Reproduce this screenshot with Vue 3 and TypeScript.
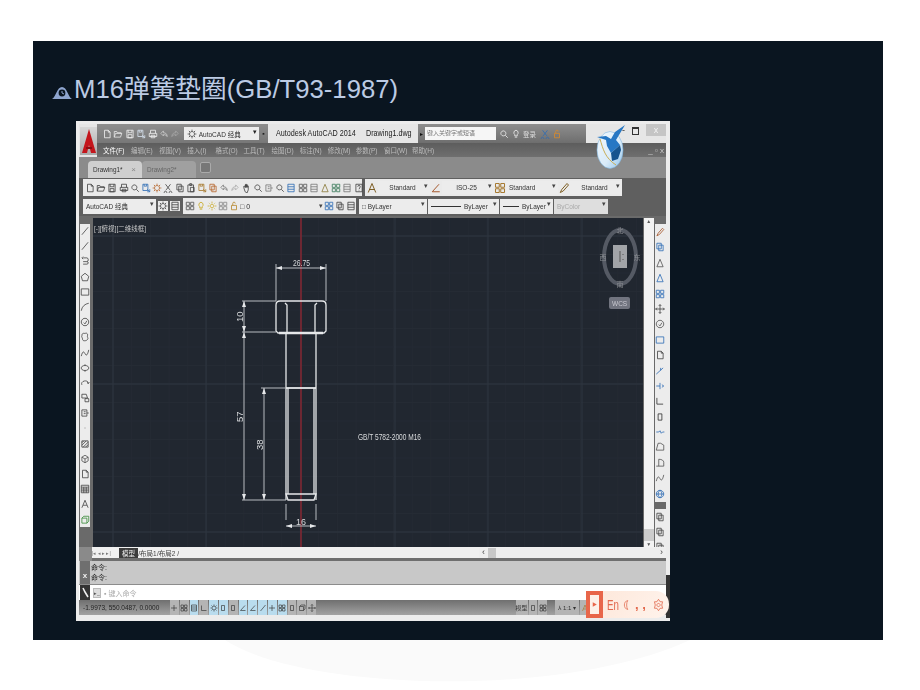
<script setup lang="ts">
import { h } from "vue";

const P: Record<string, string> = {
  doc: "M4 2h6l3 3v9H4zM10 2v3h3",
  open: "M2 13V4h4l1 2h6v2M2 13l2-6h10l-2 6z",
  save: "M3 2h10v12H3zM5 2v4h6V2M5 9h6v5H5z",
  saveas: "M3 2h8v10H3zM5 2v3h4V2M10 10l4 4M14 10v4h-4",
  print: "M4 7V2h8v5M2 7h12v5H2zM5 10h6v4H5z",
  undo: "M3 7l4-4v3c4 0 6 2 6 6-1-2-3-3-6-3v2z",
  redo: "M13 7L9 3v3c-4 0-6 2-6 6 1-2 3-3 6-3v2z",
  gear: "M8 4a4 4 0 1 0 .01 0M8 1v2M8 13v2M1 8h2M13 8h2M3 3l2 2M11 11l2 2M13 3l-2 2M5 11l-2 2",
  lens: "M7 3a4 4 0 1 0 .01 0M10 10l4 4",
  prev: "M3 3h8v10H3zM11 8h3M6 6h3M6 9h3",
  cut: "M4 2l7 9M12 2l-7 9M4 13a2 2 0 1 0 .01 0M12 13a2 2 0 1 0 .01 0",
  copy: "M3 2h7v9H3zM6 5h7v9H6z",
  paste: "M3 3h9v11H3zM6 1h3v3H6zM7 7h6v7H7z",
  hand: "M5 14L3 8V5l2 2V3h1v4-5h1v5-4h2v4-2h1v6l-2 5z",
  grid: "M2 2h5v5H2zM9 2h5v5H9zM2 9h5v5H2zM9 9h5v5H9z",
  bar: "M3 2h10v12H3zM3 6h10M3 10h10",
  help: "M3 2h10v12H3zM6 6c0-3 4-3 4 0 0 2-2 2-2 4M8 12v1",
  line: "M3 14L13 2",
  xline: "M3 14L13 2M3 14h.01M8 8h.01M13 2h.01",
  poly: "M5 3h6c3 0 3 6 0 6H5M5 13h6c3 0 3-4 0-4M5 1L3 3l2 2",
  penta: "M8 2l6 5-2 7H4L2 7z",
  rect: "M2 3h12v10H2z",
  arc: "M2 14C3 7 8 3 14 2",
  circle: "M8 2a6 6 0 1 0 .01 0M6 9l2 2 3-5",
  cloud: "M4 3c2-2 3 0 5-1s4 2 3 4 2 4 0 6-3 2-5 2-3-1-3-3-2-3-1-5-1-2 1-3z",
  wave: "M2 13c2-8 4-8 6-4s4 3 6-6",
  ell: "M8 4c-8 0-8 8 0 8s8-8 0-8M8 2v2M8 12v2",
  ellarc: "M3 11C0 4 14 2 13 9M12 6l1 3 2-2",
  block: "M3 2h7l2 6H3zM8 9h6v5H8z",
  dot: "M7.5 8h1",
  hatch: "M3 3h10v10H3zM3 6l3-3M3 10l7-7M5 13l8-8M9 13l4-4",
  cube: "M3 5l5-3 5 3v6l-5 3-5-3zM3 5l5 3 5-3M8 8v6",
  table: "M2 2h12v12H2zM2 5h12M2 8h12M2 11h12M6 5v9M10 5v9",
  letter: "M3 14L8 2l5 12M5 10h6",
  pencil: "M3 14l2-4 7-8 2 2-7 8z",
  tri: "M8 2l5 12H3z",
  arrows: "M8 1v14M1 8h14M6 3l2-2 2 2M6 13l2 2 2-2M3 6L1 8l2 2M13 6l2 2-2 2",
  bulb: "M8 2a4 4 0 0 0-2 7v2h4V9a4 4 0 0 0-2-7M6 13h4",
  sun: "M8 5a3 3 0 1 0 .01 0M8 1v2M8 13v2M1 8h2M13 8h2M3 3l1 1M12 12l1 1M13 3l-1 1M4 12l-1 1",
  lock: "M4 7h8v7H4zM6 7V4c0-3 4-3 4 0",
  model: "M3 5v8h8M3 5l3-3h8v8l-3 3M11 5v8M3 5h8",
  cross: "M8 2v12M2 8h12",
  corner: "M3 3v10h10",
  angle: "M3 13L12 3M3 13h10",
  btn: "M5 3h6v10H5z",
  trim: "M2 13L13 3M9 3v4",
  ext: "M2 8h6M8 3v10M11 6l3 2-3 2",
  join: "M2 8h4l2-2 2 4 2-2h3",
  chamfer: "M2 13h12V5L9 2H5z",
  fillet: "M2 13h12V7C14 4 11 2 6 2v11",
  globe: "M8 2a6 6 0 1 0 .01 0M2 8h12M8 2c-4 4-4 8 0 12M8 2c4 4 4 8 0 12",
};

type Ic = { n: string; c?: string };
const Ico = (props: Ic) =>
  h("svg", { class: "ic", viewBox: "0 0 16 16" }, [
    h("path", { d: P[props.n], fill: "none", stroke: props.c || "#444", "stroke-width": 1.3 }),
  ]);
Ico.props = ["n", "c"];

const ic = (names: string) => names.split(" ").map((s) => {
  const [n, c] = s.split(":");
  return { n, c } as Ic;
});

const qat = ic("doc:#f0f0f0 open:#e6e6e6 save:#f0f0f0 saveas:#d6e2ee print:#eee undo:#ccc redo:#a8a8a8");
const menus = ["文件(F)", "编辑(E)", "视图(V)", "插入(I)", "格式(O)", "工具(T)", "绘图(D)", "标注(N)", "修改(M)", "参数(P)", "窗口(W)", "帮助(H)"];
const std = ic("doc open save print lens saveas:#2f6db5 gear:#b5652b cut copy paste saveas:#a5762b copy:#b5652b undo:#777 redo:#aaa hand lens prev:#777 lens bar:#2f6db5 grid:#555 bar:#777 tri:#8a7a3a grid:#3a7a5a bar:#777 help");
const layerIcons = ic("grid:#555 bulb:#c8a820 sun:#c8a820 grid:#888 lock:#b5862b");
const leftTools = ic("line xline poly penta rect arc circle cloud wave ell ellarc block prev dot hatch cube:#555 doc table letter model:#3b8d3b");
const rightTools = ic("pencil:#a5562b copy:#2f6db5 tri:#555 tri:#2f6db5 grid:#2f6db5 arrows circle:#555 rect:#2f6db5 doc trim:#2f6db5 ext:#2f6db5 corner:#333 btn:#333 join:#2f6db5 chamfer:#555 fillet:#555 wave:#555 globe:#2f6db5");
const rightTools2 = ic("copy copy copy");
const status = [
  { n: "cross", on: false }, { n: "grid", on: false }, { n: "bar", on: true }, { n: "corner", on: false },
  { n: "gear", on: true }, { n: "btn", on: true }, { n: "btn", on: false }, { n: "angle", on: true },
  { n: "angle", on: true }, { n: "line", on: true }, { n: "cross", on: true }, { n: "grid", on: true },
  { n: "btn", on: false }, { n: "model", on: false }, { n: "arrows", on: false },
];

const gridX = Array.from({ length: 30 }, (_, i) => 20 + i * 18.7);
const gridY = Array.from({ length: 18 }, (_, i) => 18 + i * 18.5);
const majorX = [20, 113, 208, 302, 395, 489];
const majorY = [18, 166, 314];
</script>

<template>
  <div class="page">
    <svg class="swoosh" viewBox="0 0 920 690" aria-hidden="true">
      <path d="M225 640C300 690 560 700 690 640z" fill="#fafafa" />
    </svg>
    <section class="slide">
      <h1 class="title">
        <svg class="bullet" viewBox="0 0 20 13">
          <path d="M0 13C4 11 5 1 10 1s6 10 10 12z" fill="#8ea5cf" />
          <circle cx="10" cy="7" r="3.4" fill="#0a1520" />
          <path d="M10 5v2l2 1" stroke="#8ea5cf" fill="none" />
        </svg>
        <span>M16弹簧垫圈(GB/T93-1987)</span>
      </h1>

      <div class="shot">
        <div class="win">
          <div class="top">
            <div class="logo">
              <svg viewBox="0 0 16 26" width="16" height="26">
                <path d="M8 1L15 25H10L8 17 6 25H1z" fill="#c4161c" />
                <path d="M5 19h6v2H5z" fill="#8c0f14" />
              </svg>
            </div>
            <div class="top-right">
              <div class="titlebar">
                <div class="qat">
                  <Ico v-for="(i, k) in qat" :key="k" :n="i.n" :c="i.c" />
                  <div class="combo wsp"><Ico n="gear" />AutoCAD 经典<i class="caret dark">▾</i></div>
                  <i class="caret dark more">▪</i>
                </div>
                <div class="apptitle"><span>Autodesk AutoCAD 2014</span><span class="file">Drawing1.dwg</span></div>
                <div class="search">
                  <i class="tri-r">▸</i>
                  <div class="searchbox">键入关键字或短语</div>
                  <Ico n="lens" c="#eee" /><Ico n="bulb" c="#eee" /><span class="login">登录</span>
                  <span class="grow"></span>
                  <Ico n="cut" c="#2f6db5" /><Ico n="lock" c="#d98a2b" />
                </div>
                <div class="winbtns"><b>-</b><b class="sq"></b><b class="close">x</b></div>
              </div>
              <div class="menubar">
                <span v-for="(m, k) in menus" :key="m" :class="{ active: k === 0 }">{{ m }}</span>
                <span class="grow"></span>
                <span class="mdi">_ ▫ x</span>
              </div>
            </div>
          </div>

          <div class="tabs">
            <div class="tab cur"><span>Drawing1*</span> <em>×</em></div>
            <div class="tab"><span>Drawing2*</span></div>
            <div class="newtab"></div>
          </div>

          <div class="bars">
            <div class="row one">
              <div class="group std">
                <Ico v-for="(i, k) in std" :key="k" :n="i.n" :c="i.c" />
              </div>
              <div class="group tail">
                <Ico n="letter" c="#7a5a20" /><div class="combo w52 center">Standard<i class="caret">▾</i></div>
                <Ico n="angle" c="#a5562b" /><div class="combo w52 center">ISO-25<i class="caret">▾</i></div>
                <Ico n="grid" c="#a5762b" /><div class="combo w52">Standard<i class="caret">▾</i></div>
                <Ico n="pencil" c="#7a5a20" /><div class="combo w52 center">Standard<i class="caret">▾</i></div>
              </div>
            </div>
            <div class="row two">
              <div class="group wsgroup">
                <div class="combo w76">AutoCAD 经典<i class="caret">▾</i></div>
                <Ico n="gear" /><Ico n="bar" />
              </div>
              <div class="group layer">
                <Ico v-for="(i, k) in layerIcons" :key="k" :n="i.n" :c="i.c" />
                <span class="layername">□ 0</span>
                <i class="caret">▾</i>
                <Ico n="grid" c="#2f6db5" /><Ico n="copy" /><Ico n="bar" />
              </div>
              <div class="group props">
                <div class="combo w67">□ ByLayer<i class="caret">▾</i></div>
                <div class="combo w71"><u class="ln"></u>ByLayer<i class="caret">▾</i></div>
                <div class="combo w53"><u class="ln short"></u>ByLayer<i class="caret">▾</i></div>
                <div class="combo w54 off">ByColor<i class="caret">▾</i></div>
              </div>
            </div>
          </div>

          <div class="work">
            <div class="lefttools">
              <Ico v-for="(i, k) in leftTools" :key="k" :n="i.n" :c="i.c" />
            </div>
            <svg class="canvas" viewBox="0 0 550 329" width="550" height="329">
              <rect width="550" height="329" fill="#212730" />
              <g stroke="#252b34" stroke-width="1">
                <line v-for="x in gridX" :key="x" :x1="x" :x2="x" y1="0" y2="329" />
                <line v-for="y in gridY" :key="y" :y1="y" :y2="y" x1="0" x2="550" />
              </g>
              <g stroke="#2f3641" stroke-width="1">
                <line v-for="x in majorX" :key="x" :x1="x" :x2="x" y1="0" y2="329" />
                <line v-for="y in majorY" :key="y" :y1="y" :y2="y" x1="0" x2="550" />
              </g>
              <line x1="208" x2="208" y1="0" y2="329" stroke="#8c2430" stroke-width="1.4" />
              <text x="1" y="13" class="view">[-][俯视][二维线框]</text>

              <g fill="none" stroke="#e6e8ea" stroke-width="1.3">
                <path d="M187 83h42c3 0 4 2 4 4v26l-2 2h-46l-2-2V87c0-2 1-4 4-4z" />
                <path d="M192 85l2 2v28M224 85l-2 2v28" />
                <path d="M186 115h44" stroke-width="2.4" />
                <path d="M193 115v167M223 115v167" />
                <path d="M193 170h30" stroke-width="1.8" />
                <path d="M195 170v106M221 170v106" />
                <path d="M193 276h30l-2 6h-26z" />
              </g>
              <g fill="none" stroke="#b8bcc0" stroke-width="1">
                <path d="M183 46v37M233 46v37M183 50h50" />
                <path d="M149 83h34M149 114h34M151 83v199" />
                <path d="M168 170h25M171 170v112M149 282h44" />
                <path d="M193 286v16M223 286v16M193 308h30" />
              </g>
              <g fill="#e6e8ea">
                <path d="M183 50l6-2v4zM233 50l-6-2v4zM151 83l-2 6h4zM151 114l-2-6h4zM151 114l-2 6h4zM151 282l-2-6h4zM171 170l-2 6h4zM171 282l-2-6h4zM193 308l6-2v4zM223 308l-6-2v4z" />
              </g>
              <g class="dim">
                <text x="200" y="48" textLength="17" lengthAdjust="spacingAndGlyphs">26.75</text>
                <text x="203" y="307" textLength="10" lengthAdjust="spacingAndGlyphs">16</text>
                <text transform="translate(150 104) rotate(-90)">10</text>
                <text transform="translate(150 204) rotate(-90)">57</text>
                <text transform="translate(170 232) rotate(-90)">38</text>
                <text x="265" y="222" class="note" textLength="63" lengthAdjust="spacingAndGlyphs">GB/T 5782-2000 M16</text>
              </g>

              <g>
                <ellipse cx="527" cy="39" rx="16" ry="27" fill="none" stroke="#555a64" stroke-width="4" />
                <rect x="520" y="27" width="14" height="23" fill="#a2a4a8" />
                <path d="M527 33v11M530 36v1M530 41v1" stroke="#555" fill="none" />
                <text x="527" y="15" class="cmp">北</text>
                <text x="527" y="69" class="cmp">南</text>
                <text x="510" y="42" class="cmp">西</text>
                <text x="544" y="42" class="cmp">东</text>
                <rect x="516" y="79" width="21" height="12" rx="2" fill="#71747f" />
                <text x="519" y="88" class="wcs">WCS</text>
              </g>
            </svg>
            <div class="vscroll">
              <i>▲</i><span class="grow"></span><b></b><i>▼</i>
            </div>
            <div class="righttools">
              <div class="rt">
                <Ico v-for="(i, k) in rightTools" :key="k" :n="i.n" :c="i.c" />
              </div>
              <div class="rt second">
                <Ico v-for="(i, k) in rightTools2" :key="k" :n="i.n" :c="i.c" />
              </div>
            </div>
          </div>

          <div class="layouts">
            <span class="nav">|◂ ◂ ▸ ▸|</span>
            <span class="ltab cur">模型</span>
            <span class="ltab">/布局1</span>
            <span class="ltab">/布局2 /</span>
            <span class="grow"></span>
            <div class="hscroll"><i>‹</i><b></b><span class="grow"></span><i>›</i></div>
          </div>

          <div class="cmdlog">
            <div class="cmdhandle">x</div>
            <div class="cmdtext">命令:<br />命令:</div>
          </div>
          <div class="cmdinput">
            <div class="cmdwrench">
              <svg viewBox="0 0 10 15" width="10" height="15"><path d="M3 3l2 4 3 5" stroke="#eee" stroke-width="1.6" fill="none" /></svg>
            </div>
            <span class="prompt">▸_</span><span class="hint">▪ 键入命令</span>
          </div>
          <div class="statusbar">
            <span class="coords">-1.9973, 550.0487, 0.0000</span>
            <div class="stbtns">
              <span v-for="(s, k) in status" :key="k" :class="['st', { on: s.on }]"><Ico :n="s.n" c="#333" /></span>
            </div>
            <span class="grow"></span>
            <div class="stbtns">
              <span class="st tx">模型</span><span class="st"><Ico n="btn" c="#333" /></span><span class="st"><Ico n="grid" c="#333" /></span>
            </div>
            <div class="stbtns scale">
              <span class="st tx wide">⅄ 1:1 ▾</span><span class="st"><Ico n="letter" c="#a5762b" /></span>
            </div>
          </div>
        </div>

        <!-- floating bird badge over the title bar -->
        <svg class="bird" viewBox="0 0 30 44">
          <defs>
            <linearGradient id="egg" x1="0" y1="0" x2="1" y2="1">
              <stop offset="0" stop-color="#f2f8fd" />
              <stop offset=".6" stop-color="#d9ebf9" />
              <stop offset="1" stop-color="#8fc2ea" />
            </linearGradient>
          </defs>
          <ellipse cx="14" cy="25" rx="13" ry="18.5" fill="url(#egg)" stroke="#7fb4de" stroke-width=".6" />
          <path d="M29 0L19 7 15 14 10 11 1 12l9 3 1 6 4 7 9-8-4-5z" fill="#2677c4" />
          <path d="M15 28l9-8 1 5-3 9-6 2z" fill="#16548f" />
          <path d="M4 14C7 24 9 33 20 40" fill="none" stroke="#c9ad55" stroke-width="1" />
        </svg>

        <!-- scrollbar stub of the outer window -->
        <div class="stub"></div>

        <!-- input method bar, sits over the status bar -->
        <div class="ime">
          <div class="ime-logo"><svg viewBox="0 0 12 12"><path d="M3 2l7 4-7 4z" fill="#e8664a" /></svg></div>
          <span class="en">En</span>
          <svg class="ime-ic" viewBox="0 0 12 16"><path d="M9 2C3 3 3 13 9 14 7 11 7 5 9 2z" fill="none" stroke="#e2684c" /></svg>
          <span class="comma">, ,</span>
          <svg class="ime-gear" viewBox="0 0 16 16"><path d="M8 1l2 3h3l-1 4 1 4h-3l-2 3-2-3H3l1-4-1-4h3zM8 6a2 2 0 1 0 .01 0" fill="none" stroke="#e2684c" /></svg>
        </div>
      </div>
    </section>
  </div>
</template>

<style>
html, body { margin: 0; background: #fff; }
</style>

<style scoped>
.page {
  position: relative;
  width: 920px;
  height: 690px;
  padding: 41px 37px 0 33px;
  box-sizing: border-box;
  background: #fff;
  overflow: hidden;
  font-family: "Liberation Sans", "Noto Sans CJK SC", sans-serif;
}
.swoosh { position: absolute; inset: 0; width: 920px; height: 690px; }
.slide {
  position: relative;
  width: 850px;
  height: 599px;
  background: #0a1520;
  box-sizing: border-box;
  padding: 33px 0 0 19px;
}
.title {
  display: flex;
  align-items: center;
  gap: 2px;
  margin: 0;
  height: 31px;
  font-size: 25.7px;
  font-weight: 400;
  line-height: 31px;
  color: #bccbe4;
  white-space: nowrap;
}
.bullet { width: 20px; height: 13px; margin-top: 5px; }
.shot {
  position: relative;
  width: 594px;
  height: 500px;
  margin: 16px 0 0 24px;
  background: #ececec;
  padding: 3px 4px 6px 3px;
  box-sizing: border-box;
  filter: blur(0.4px);
  font-size: 7px;
  color: #333;
}
.win { display: flex; flex-direction: column; height: 100%; background: #8a8a8a; }
.ic { width: 10px; height: 10px; flex: none; }
.grow { flex: 1; }
i { font-style: normal; }

.top { display: flex; height: 33px; background: #e6e6e6; }
.logo {
  width: 17px;
  margin: 3px 0 2px 1px;
  background: linear-gradient(#d8d8d8, #aaa);
  display: flex;
  align-items: center;
  justify-content: center;
}
.top-right { flex: 1; display: flex; flex-direction: column; }
.titlebar { height: 19px; display: flex; align-items: center; }
.qat {
  display: flex;
  align-items: center;
  gap: 1.4px;
  width: 171px;
  padding-left: 5px;
  box-sizing: border-box;
  height: 100%;
  background: linear-gradient(#8e8e8e, #777);
}
.combo {
  position: relative;
  display: flex;
  align-items: center;
  height: 13px;
  padding-left: 3px;
  box-sizing: border-box;
  background: #ececec;
  font-size: 6.5px;
  white-space: nowrap;
  color: #333;
}
.wsp { width: 75px; margin-left: 2px; gap: 2px; }
.caret { position: absolute; right: 2px; top: 1px; font-size: 7px; color: #444; }
.caret.dark { color: #222; }
.more { position: static; margin-left: 2px; }
.apptitle {
  width: 150px;
  padding-left: 8px;
  box-sizing: border-box;
  display: flex;
  font: 9px/19px "Liberation Sans", sans-serif;
  color: #222;
  white-space: nowrap;
}
.apptitle span { display: block; width: 90px; transform: scaleX(0.8); transform-origin: left; }
.apptitle .file { width: 50px; }
.search {
  width: 168px;
  height: 100%;
  display: flex;
  align-items: center;
  gap: 2px;
  background: linear-gradient(#8e8e8e, #6e6e6e);
  box-sizing: border-box;
  padding-right: 24px;
}
.tri-r { font-size: 6px; color: #111; margin-left: 2px; }
.searchbox {
  width: 78px;
  height: 13px;
  background: #f6f6f6;
  font-size: 6px;
  line-height: 13px;
  padding-left: 2px;
  box-sizing: border-box;
  color: #777;
  margin-right: 1px;
}
.login { font-size: 6.5px; color: #ddd; white-space: nowrap; }
.winbtns { flex: 1; display: flex; align-items: flex-start; height: 100%; justify-content: flex-end; gap: 7px; }
.winbtns b { font-weight: 400; font-size: 9px; color: #333; line-height: 12px; }
.winbtns .sq { width: 5px; height: 5px; border: 1px solid #333; border-top-width: 2px; margin-top: 3px; }
.winbtns .close { width: 20px; height: 12px; background: #c5c5c5; color: #f3f3f3; text-align: center; }
.menubar {
  height: 14px;
  display: flex;
  align-items: center;
  background: linear-gradient(#5d5d5d, #6f6f6f);
  padding-left: 6px;
  font-size: 6.5px;
  color: #bdbdbd;
}
.menubar span:not(.grow):not(.mdi) { width: 28.1px; flex: none; white-space: nowrap; }
.menubar .active { color: #fff; }
.mdi { padding-right: 2px; color: #ccc; font-size: 8px; }

.tabs {
  height: 21px;
  display: flex;
  align-items: flex-end;
  background: #8b8b8b;
  padding-left: 9px;
  font: 8px "Liberation Sans", sans-serif;
}
.tab {
  width: 54px;
  height: 17px;
  line-height: 17px;
  padding-left: 5px;
  box-sizing: border-box;
  background: #a0a0a0;
  color: #666;
  border-radius: 4px 4px 0 0;
  white-space: nowrap;
}
.tab span { display: inline-block; width: 28px; transform: scaleX(0.8); transform-origin: left; }
.tab.cur { background: #cfcfcf; color: #333; }
.tab em { font-style: normal; margin-left: 8px; color: #888; }
.newtab { width: 9px; height: 9px; margin: 0 0 5px 4px; background: #777; border: 1px solid #aaa; border-radius: 2px; }

.bars { height: 38px; background: #5f5f5f; display: flex; flex-direction: column; gap: 2px; padding: 1px 0 0 4px; box-sizing: border-box; }
.row { display: flex; gap: 3px; align-items: center; }
.row.one { height: 17px; }
.row.two { height: 16px; }
.group { display: flex; align-items: center; height: 100%; background: #eaeaea; }
.std { width: 279px; gap: 1.2px; padding-left: 2px; box-sizing: border-box; }
.tail { padding-left: 1px; }
.tail .ic { width: 12px; height: 12px; }
.w52 { width: 52px; }
.center { justify-content: center; padding-right: 6px; }
.wsgroup { width: 97px; gap: 2px; background: transparent; }
.wsgroup .ic { background: #eaeaea; }
.w76 { width: 76px; height: 15px; }
.layer { position: relative; width: 173px; gap: 1px; padding-left: 2px; box-sizing: border-box; }
.layername { width: 114px; font-size: 7px; }
.layer .caret { position: static; }
.props { gap: 1px; background: transparent; }
.props .combo { height: 15px; }
.w67 { width: 68px; }
.w71 { width: 71px; gap: 3px; }
.w53 { width: 53px; gap: 3px; }
.w54 { width: 54px; }
.off { color: #aaa; background: #dedede; }
.ln { display: block; width: 30px; border-top: 1px solid #333; }
.ln.short { width: 16px; }

.work { flex: 1; display: flex; min-height: 0; background: #6a6a6a; padding-top: 2px; box-sizing: border-box; }
.lefttools {
  width: 10px;
  height: 303px;
  margin: 6px 3px 0 1px;
  padding-top: 2px;
  box-sizing: border-box;
  background: #ececec;
  display: flex;
  flex-direction: column;
  align-items: center;
  gap: 5.2px;
}
.canvas { flex: none; display: block; font-family: "Liberation Sans", "Noto Sans CJK SC", sans-serif; }
.view { font-size: 6.5px; fill: #c8c8c8; }
.dim text { font-size: 9.5px; fill: #d8dadc; }
.dim .note { font-size: 8.5px; }
.cmp { font-size: 7px; fill: #8a8d92; text-anchor: middle; }
.wcs { font-size: 6.5px; fill: #c8c8d0; }
.vscroll {
  width: 10px;
  margin: 0 1px;
  background: #f3f3f3;
  display: flex;
  flex-direction: column;
  align-items: center;
  font-size: 5px;
  color: #555;
}
.vscroll b { width: 100%; height: 12px; background: #ccc; }
.righttools { width: 12px; display: flex; flex-direction: column; gap: 7px; padding-top: 6px; box-sizing: border-box; }
.rt { display: flex; flex-direction: column; align-items: center; gap: 5.4px; background: #ececec; padding: 3px 0; }
.rt.second { flex: 1; }

.layouts {
  height: 11px;
  display: flex;
  align-items: center;
  background: #f0f0f0;
  border-bottom: 3px solid #6f6f6f;
  margin-left: 13px;
  font-size: 6.5px;
  color: #444;
}
.nav { width: 27px; font-size: 5px; white-space: nowrap; color: #777; }
.ltab { width: 19px; text-align: center; white-space: nowrap; }
.ltab.cur { background: #3c3c3c; color: #eee; }
.hscroll { width: 187px; display: flex; align-items: center; gap: 3px; background: #eee; padding: 0 3px; box-sizing: border-box; font-size: 9px; line-height: 9px; }
.hscroll b { width: 8px; height: 10px; background: #c8c8c8; }
.cmdlog { height: 24px; display: flex; background: #c8c8c8; border-bottom: 1px solid #8c8c8c; box-sizing: border-box; }
.cmdhandle { width: 10px; margin-left: 1px; background: #6f6f6f; color: #eee; text-align: center; font: 700 8px/30px "Liberation Sans", sans-serif; }
.cmdtext { font-size: 7px; line-height: 10px; padding: 2px 0 0 1px; color: #222; }
.cmdinput { height: 15px; display: flex; align-items: center; gap: 3px; background: #fff; font-size: 7px; }
.cmdwrench { width: 10px; height: 100%; margin-left: 1px; background: #333; }
.prompt { font-size: 5px; width: 6px; height: 8px; background: #ddd; color: #555; border: 1px solid #bbb; line-height: 8px; overflow: hidden; }
.hint { color: #aaa; }
.statusbar {
  height: 15px;
  display: flex;
  align-items: center;
  background: linear-gradient(#6f6f6f, #a2a2a2);
  font-size: 6.5px;
  padding-right: 3px;
  box-sizing: border-box;
}
.coords { width: 91px; padding-left: 4px; box-sizing: border-box; color: #222; white-space: nowrap; }
.stbtns { display: flex; height: 100%; gap: 1px; }
.st { width: 8.8px; display: flex; align-items: center; justify-content: center; background: #b4b4b4; }
.st .ic { width: 8px; height: 8px; }
.st.on { background: #b9dcee; }
.st.tx { width: 12px; white-space: nowrap; font-size: 6px; }
.st.tx.wide { width: 24px; }
.scale { margin: 0 74px 0 8px; }

.bird { position: absolute; left: 520px; top: 4px; width: 30px; height: 44px; }
.stub { position: absolute; right: 0; top: 454px; width: 4px; height: 43px; background: #333; }
.ime {
  position: absolute;
  left: 510px;
  top: 470px;
  width: 83px;
  height: 27px;
  background: linear-gradient(120deg, #fde6d8, #fff3ec);
  border-radius: 0 13px 13px 0;
  display: flex;
  align-items: center;
  color: #e2684c;
}
.ime-logo {
  width: 17px;
  height: 27px;
  flex: none;
  background: #fdf1e9;
  border: 4px solid #e8664a;
  box-sizing: border-box;
  display: flex;
  align-items: center;
  justify-content: center;
}
.ime-logo svg { width: 7px; height: 7px; }
.en { width: 13px; margin-left: 4px; font: 15px "Liberation Sans", sans-serif; display: block; transform: scaleX(0.65); transform-origin: left; white-space: nowrap; }
.ime-ic { width: 9px; height: 16px; margin-left: 1px; flex: none; }
.comma { margin-left: 5px; font: 700 13px/16px "Liberation Sans", sans-serif; width: 12px; white-space: nowrap; flex: none; }
.ime-gear { width: 13px; height: 14px; margin-left: 5px; flex: none; }
</style>
